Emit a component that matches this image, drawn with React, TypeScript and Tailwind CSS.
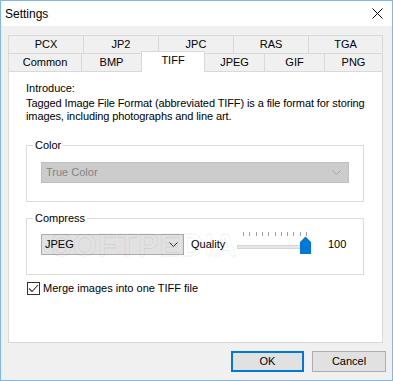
import React from "react";

const topTabs = [
  { label: "PCX", w: "w-[75px]" },
  { label: "JP2", w: "w-[75px]" },
  { label: "JPC", w: "w-[75px]" },
  { label: "RAS", w: "w-[75px]" },
  { label: "TGA", w: "w-[75px] border-r" },
];

function Chevron({ color }: { color: string }) {
  return (
    <svg width="9" height="5" viewBox="0 0 9 5" className="shrink-0">
      <path d="M0.5 0.5 L4.5 4.5 L8.5 0.5" fill="none" stroke={color} strokeWidth="1" />
    </svg>
  );
}

function Slider() {
  const ticks = Array.from({ length: 11 }, (_, i) => 7 + i * 6.3);
  return (
    <svg width="76" height="23" viewBox="0 0 76 23" className="shrink-0 -mt-[2px]">
      {ticks.map((x, i) => (
        <rect key={i} x={Math.round(x)} y="0" width="1" height="4" fill="#a0a0a0" />
      ))}
      <rect x="1.5" y="13.5" width="64" height="3" fill="#e7e7e7" stroke="#d6d6d6" />
      <polygon points="64,10 69.5,4.5 75,10 75,22 64,22" fill="#0078d7" />
    </svg>
  );
}

export default function App() {
  return (
    <div className="w-[393px] h-[381px] flex flex-col border border-[#7fb6ec] bg-[#f0f0f0] font-['Liberation_Sans',Arial,sans-serif] text-[11px] text-black">
      {/* title bar */}
      <div className="h-[25px] bg-white flex items-center justify-between pl-[4px] pr-[9px]">
        <span className="text-[12px] leading-none">Settings</span>
        <svg width="11" height="11" viewBox="0 0 11 11">
          <path d="M0.5 0.5 L10.5 10.5 M10.5 0.5 L0.5 10.5" stroke="#000" strokeWidth="1" />
        </svg>
      </div>

      <div className="flex-1 pt-[9px] pl-[7px]">
        {/* tabs */}
        <div className="w-[375px]">
          <div className="flex">
            {topTabs.map((t) => (
              <div
                key={t.label}
                className={`${t.w} h-[18px] border-l border-t border-[#d9d9d9] flex justify-center leading-[17px]`}
              >
                {t.label}
              </div>
            ))}
          </div>
          <div className="flex items-start">
            <div className="w-[73px] h-[18px] border-l border-t border-[#d9d9d9] flex justify-center leading-[17px]">Common</div>
            <div className="w-[60px] h-[18px] border-l border-t border-[#d9d9d9] flex justify-center leading-[17px]">BMP</div>
            <div className="relative z-10 w-[64px] h-[21px] -mt-[2px] -mb-[1px] bg-white border-l border-t border-r border-[#d9d9d9] flex justify-center leading-[17px]">TIFF</div>
            <div className="w-[59px] h-[18px] border-t border-[#d9d9d9] flex justify-center leading-[17px]">JPEG</div>
            <div className="w-[60px] h-[18px] border-l border-t border-[#d9d9d9] flex justify-center leading-[17px]">GIF</div>
            <div className="w-[59px] h-[18px] border-l border-t border-r border-[#d9d9d9] flex justify-center leading-[17px]">PNG</div>
          </div>

          {/* panel */}
          <div className="relative h-[272px] bg-white border border-[#d9d9d9] pt-[10px] pl-[17px] pr-[18px]">
            <div className="leading-[13px] mb-[2px]">Introduce:</div>
            <div className="leading-[13px] w-[348px] tracking-[-0.1px]">
              Tagged Image File Format (abbreviated TIFF) is a file format for storing images, including photographs and line art.
            </div>

            <div className="relative mt-[22px] border border-[#dcdcdc] pt-[16px] pb-[18px] pl-[14px]">
              <span className="absolute -top-[7px] left-[6px] px-[2px] bg-white leading-[13px]">Color</span>
              <div className="w-[308px] h-[21px] bg-[#cccccc] border border-[#bfbfbf] flex items-center justify-between pl-[4px] pr-[7px] text-[#838383]">
                <span>True Color</span>
                <Chevron color="#a6a6a6" />
              </div>
            </div>

            <div className="relative mt-[16px] border border-[#dcdcdc] pt-[15px] pb-[19px] pl-[14px]">
              <span className="absolute -top-[7px] left-[6px] px-[2px] bg-white leading-[13px]">Compress</span>
              <div className="flex items-center h-[21px]">
                <div className="w-[143px] h-[21px] bg-[#e1e1e1] border border-[#adadad] flex items-center justify-between pl-[3px] pr-[5px]">
                  <span>JPEG</span>
                  <Chevron color="#333333" />
                </div>
                <span className="ml-[7px] w-[45px]">Quality</span>
                <Slider />
                <span className="ml-[16px]">100</span>
              </div>
            </div>

            <div className="mt-[7px] flex items-center h-[13px] pl-[1px]">
              <div className="w-[13px] h-[13px] border border-[#333333] bg-white flex items-center justify-center">
                <svg width="11" height="9" viewBox="0 0 11 9">
                  <path d="M1 4.5 L4 7.5 L10 1" fill="none" stroke="#333333" strokeWidth="1.1" />
                </svg>
              </div>
              <span className="ml-[3px] leading-[13px]">Merge images into one TIFF file</span>
            </div>

            <span className="pointer-events-none absolute left-[42px] top-[158px] text-[31px] font-bold tracking-[1px] leading-none text-transparent [-webkit-text-stroke:1px_rgba(0,0,0,0.07)]">
              SOFTPEDIA
            </span>
          </div>
        </div>

        {/* buttons */}
        <div className="flex justify-end gap-[8px] pr-[6px] mt-[8px]">
          <button className="w-[73px] h-[21px] bg-[#e1e1e1] border-2 border-[#0078d7] leading-none">OK</button>
          <button className="w-[74px] h-[21px] bg-[#e1e1e1] border border-[#adadad] leading-none">Cancel</button>
        </div>
      </div>
    </div>
  );
}
